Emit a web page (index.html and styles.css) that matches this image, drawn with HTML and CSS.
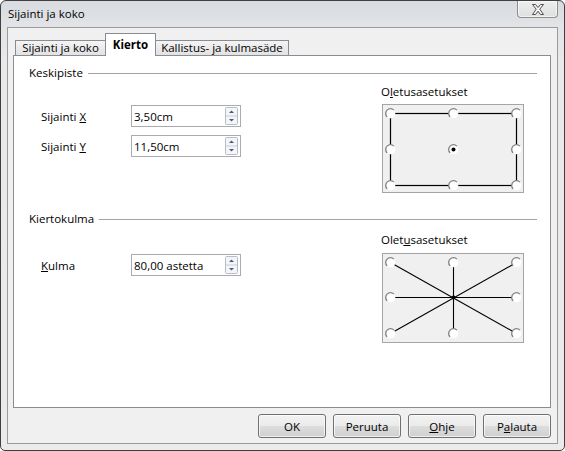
FILE: index.html
```html
<!DOCTYPE html>
<html lang="fi">
<head>
<meta charset="utf-8">
<title>Sijainti ja koko</title>
<link rel="stylesheet" href="styles.css">
</head>
<body>
<div class="window">
  <div class="titlebar">
    <span class="title">Sijainti ja koko</span>
    <div class="close">
      <svg width="12" height="11" viewBox="0 0 12 11"><polygon points="0.5,0.5 3.5,0.5 6,3.5 8.5,0.5 11.5,0.5 7.8,5.2 11.5,10.5 8.5,10.5 6,7.2 3.5,10.5 0.5,10.5 4.2,5.2" fill="#f6f6f6" stroke="#505050" stroke-width="1" stroke-linejoin="round"/></svg>
    </div>
  </div>
  <div class="client">
    <div class="tabs">
      <div class="tab tab-first">Sijainti ja koko</div>
      <div class="tab active">Kierto</div>
      <div class="tab tab-last">Kallistus- ja kulmasäde</div>
    </div>
    <div class="panel">
      <section class="group g1">
        <div class="group-head"><span>Keskipiste</span><span class="line"></span></div>
        <div class="group-body">
          <div class="fields">
            <div class="field">
              <span class="label">Sijainti <u>X</u></span>
              <div class="spin"><span class="value">3,50cm</span>
                <svg class="spin-btns" width="13" height="18" viewBox="0 0 13 18"><rect x="0.5" y="0.5" width="12" height="17" rx="1" fill="#f3f5f8" stroke="#b6bdc6"/><line x1="1" y1="9" x2="12" y2="9" stroke="#c9ced5"/><polygon points="4,6 6.5,3.5 9,6" fill="#4c5a74"/><polygon points="4,12 9,12 6.5,14.5" fill="#4c5a74"/></svg>
              </div>
            </div>
            <div class="field">
              <span class="label">Sijainti <u>Y</u></span>
              <div class="spin"><span class="value">11,50cm</span>
                <svg class="spin-btns" width="13" height="18" viewBox="0 0 13 18"><rect x="0.5" y="0.5" width="12" height="17" rx="1" fill="#f3f5f8" stroke="#b6bdc6"/><line x1="1" y1="9" x2="12" y2="9" stroke="#c9ced5"/><polygon points="4,6 6.5,3.5 9,6" fill="#4c5a74"/><polygon points="4,12 9,12 6.5,14.5" fill="#4c5a74"/></svg>
              </div>
            </div>
          </div>
          <div class="preset-label">O<u>l</u>etusasetukset</div>
          <div class="preset-box">
            <svg width="140" height="87" viewBox="0 0 140 87">
              <defs>
                <g id="rb"><circle r="4.8" fill="#fff"/><path d="M-3.4 3.4 A4.8 4.8 0 0 1 3.4 -3.4" fill="none" stroke="#7f7f7f" stroke-width="1.3"/></g>
              </defs>
              <rect x="7.5" y="8.5" width="126" height="72" fill="none" stroke="#000" stroke-width="1.2"/>
              <use href="#rb" x="7.5" y="8.5"/><use href="#rb" x="70.5" y="8.5"/><use href="#rb" x="133.5" y="8.5"/>
              <use href="#rb" x="7.5" y="44.5"/><use href="#rb" x="70.5" y="44.5"/><use href="#rb" x="133.5" y="44.5"/>
              <use href="#rb" x="7.5" y="80.5"/><use href="#rb" x="70.5" y="80.5"/><use href="#rb" x="133.5" y="80.5"/>
              <circle cx="70.5" cy="44.5" r="2" fill="#000"/>
            </svg>
          </div>
        </div>
      </section>
      <section class="group g2">
        <div class="group-head"><span>Kiertokulma</span><span class="line"></span></div>
        <div class="group-body">
          <div class="fields">
            <div class="field">
              <span class="label"><u>K</u>ulma</span>
              <div class="spin"><span class="value">80,00 astetta</span>
                <svg class="spin-btns" width="13" height="18" viewBox="0 0 13 18"><rect x="0.5" y="0.5" width="12" height="17" rx="1" fill="#f3f5f8" stroke="#b6bdc6"/><line x1="1" y1="9" x2="12" y2="9" stroke="#c9ced5"/><polygon points="4,6 6.5,3.5 9,6" fill="#4c5a74"/><polygon points="4,12 9,12 6.5,14.5" fill="#4c5a74"/></svg>
              </div>
            </div>
          </div>
          <div class="preset-label">Olet<u>u</u>sasetukset</div>
          <div class="preset-box">
            <svg width="140" height="88" viewBox="0 0 140 88">
              <g stroke="#000" stroke-width="1.1" fill="none">
                <line x1="7.5" y1="8.5" x2="133.5" y2="79.5"/>
                <line x1="133.5" y1="8.5" x2="7.5" y2="79.5"/>
                <line x1="70.5" y1="8.5" x2="70.5" y2="79.5"/>
                <line x1="7.5" y1="43.5" x2="133.5" y2="43.5"/>
              </g>
              <use href="#rb" x="7.5" y="8.5"/><use href="#rb" x="70.5" y="8.5"/><use href="#rb" x="133.5" y="8.5"/>
              <use href="#rb" x="7.5" y="43.5"/><use href="#rb" x="133.5" y="43.5"/>
              <use href="#rb" x="7.5" y="79.5"/><use href="#rb" x="70.5" y="79.5"/><use href="#rb" x="133.5" y="79.5"/>
              <circle cx="70.5" cy="43.5" r="2" fill="#000"/>
            </svg>
          </div>
        </div>
      </section>
    </div>
    <div class="buttons">
      <button class="btn">OK</button>
      <button class="btn">Peruuta</button>
      <button class="btn"><u>O</u>hje</button>
      <button class="btn">P<u>a</u>lauta</button>
    </div>
  </div>
</div>
</body>
</html>
```
FILE: styles.css
```css
* { box-sizing: border-box; }
html, body { margin: 0; padding: 0; }
body {
  font-family: "Open Sans", "Noto Sans", sans-serif;
  font-size: 11.5px;
  color: #000;
  background: #fff;
}
.window {
  width: 565px;
  height: 451px;
  border: 1px solid #3f3f3f;
  border-radius: 6px 6px 5px 5px;
  background: linear-gradient(to bottom, #d8dbdf 0px, #e2e4e7 26px, #e9e9ea 60px, #ebebeb 100%);
  padding: 0 6px 6px 6px;
  display: flex;
  flex-direction: column;
  overflow: hidden;
}
.titlebar {
  height: 26px;
  display: flex;
  justify-content: space-between;
  align-items: flex-start;
}
.title {
  margin-top: 5px;
  padding-left: 1px;
  line-height: 16px;
}
.close {
  width: 41px;
  height: 17px;
  border: 1px solid #8e8e8e;
  border-top: none;
  border-radius: 0 0 4px 4px;
  background: linear-gradient(to bottom, #eeeeee, #dedfe0);
  box-shadow: inset 0 0 0 1px rgba(255,255,255,0.6);
  display: flex;
  align-items: center;
  justify-content: center;
}
.client {
  flex: 1;
  border: 1px solid #9b9b9b;
  background: #f0f0f0;
  padding: 5px 6px 5px 5px;
  display: flex;
  flex-direction: column;
}
.tabs {
  display: flex;
  align-items: flex-end;
  height: 23px;
  margin: 0 0 -1px 2px;
  position: relative;
  z-index: 1;
}
.tab {
  height: 15px;
  margin-bottom: 1px;
  border: 1px solid #898c95;
  border-bottom: none;
  background: linear-gradient(to bottom, #f4f4f4, #e2e2e2);
  line-height: 14px;
  text-align: center;
  white-space: nowrap;
}
.tab-first { width: 90px; border-right: none; }
.tab-last { width: 133px; border-left: none; }
.tab.active {
  width: 51px;
  height: 23px;
  margin-bottom: 0;
  background: #fff;
  font-weight: bold;
  line-height: 22px;
}
.panel {
  flex: 1;
  background: #fff;
  border: 1px solid #898c95;
  padding: 9px 13px 0 15px;
}
.group-head {
  display: flex;
  align-items: center;
  height: 16px;
  line-height: 16px;
}
.group-head .line {
  flex: 1;
  height: 1px;
  margin: 1px 0 0 5px;
  background: #a3a3a3;
}
.group-body {
  display: grid;
  grid-template-columns: 1fr 142px;
  padding: 0 13px 0 12px;
  margin-top: 3px;
}
.fields {
  grid-column: 1;
  grid-row: 2;
  padding-top: 5px;
  display: flex;
  flex-direction: column;
  gap: 8px;
}
.field {
  display: flex;
  align-items: center;
  height: 22px;
}
.label { width: 90px; }
.spin {
  width: 110px;
  height: 22px;
  border: 1px solid #a9abb0;
  background: #fff;
  display: flex;
  align-items: center;
  padding-left: 2px;
}
.spin .value { flex: 1; }
.spin-btns { margin-right: 2px; display: block; }
.preset-label {
  grid-column: 2;
  grid-row: 1;
  line-height: 16px;
  margin-left: -1px;
}
.preset-box {
  grid-column: 2;
  grid-row: 2;
  height: 89px;
  margin-top: 4px;
  border: 1px solid #a5a5a5;
  background: #f0f0f0;
}
.preset-box svg { display: block; }
.g2 { margin-top: 18px; }
.g2 .group-body { margin-top: 5px; }
.g2 .preset-box { margin-top: 5px; height: 90px; }
.g2 .fields { padding-top: 6px; }
.buttons {
  display: flex;
  justify-content: flex-end;
  gap: 7px;
  margin-top: 6px;
}
.btn {
  width: 68px;
  height: 24px;
  padding: 0;
  border: 1px solid #707070;
  border-radius: 3px;
  background: linear-gradient(to bottom, #f2f2f2 0%, #ebebeb 48%, #dddddd 52%, #cfcfcf 100%);
  box-shadow: inset 0 0 0 1px rgba(255,255,255,0.7);
  font: inherit;
  color: #000;
}
```
